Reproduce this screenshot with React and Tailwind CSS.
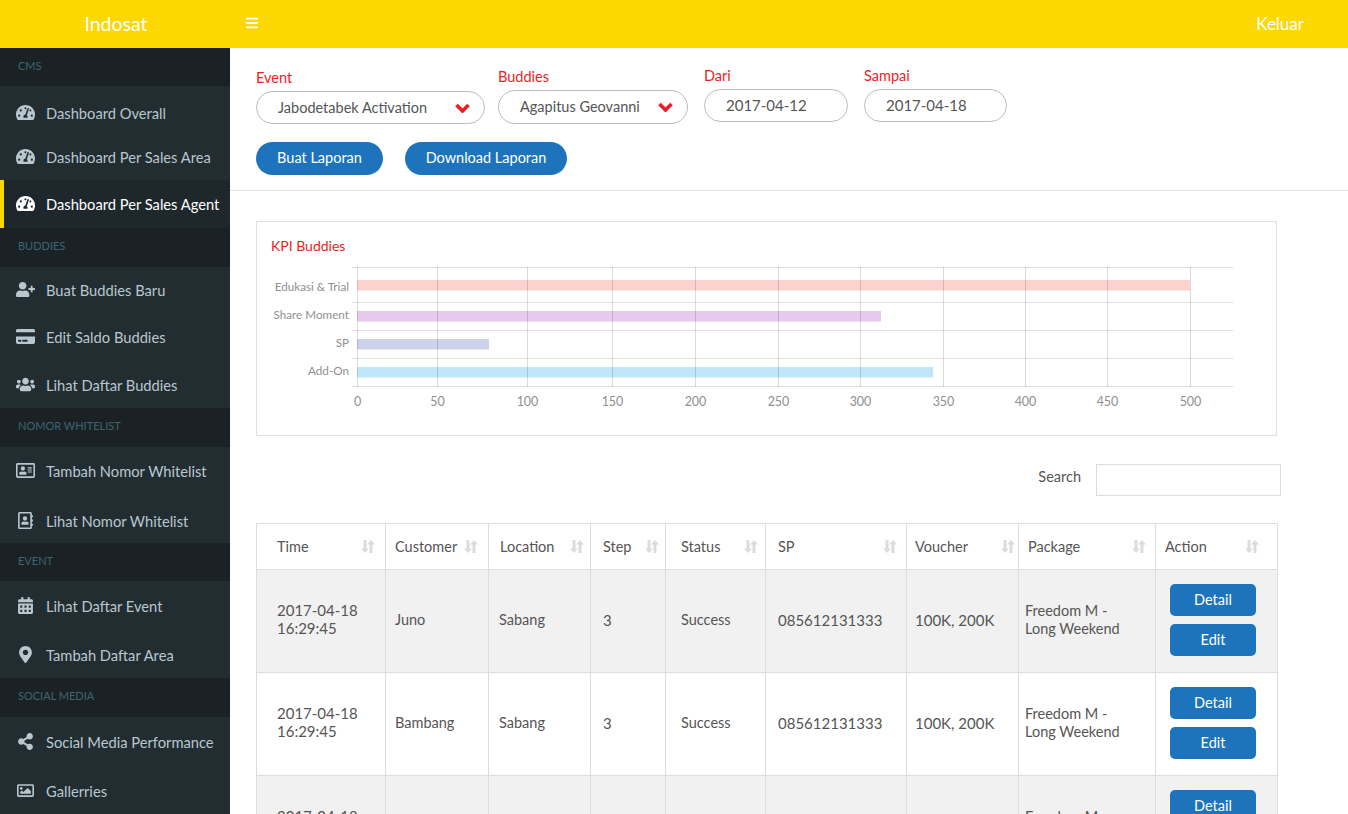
import { FaTachometerAlt, FaUserPlus, FaCreditCard, FaUsers, FaRegAddressCard, FaRegAddressBook, FaCalendarAlt, FaMapMarkerAlt, FaShareAlt, FaRegImage, FaBars } from 'react-icons/fa'

const MENU = [
  { section: 'CMS', head: 'h-[38px] pb-[1px]', items: [
    { label: 'Dashboard Overall', icon: FaTachometerAlt, h: 'h-[48px] pt-[4px]' },
    { label: 'Dashboard Per Sales Area', icon: FaTachometerAlt, h: 'h-[46px] pb-[2px]' },
    { label: 'Dashboard Per Sales Agent', icon: FaTachometerAlt, h: 'h-[48px] pb-[2px]', active: true },
  ] },
  { section: 'BUDDIES', head: 'h-[39px] pb-[2px]', items: [
    { label: 'Buat Buddies Baru', icon: FaUserPlus, h: 'h-[45px]' },
    { label: 'Edit Saldo Buddies', icon: FaCreditCard, h: 'h-[48px]' },
    { label: 'Lihat Daftar Buddies', icon: FaUsers, h: 'h-[48px]' },
  ] },
  { section: 'NOMOR WHITELIST', head: 'h-[39px] pb-[2px]', items: [
    { label: 'Tambah Nomor Whitelist', icon: FaRegAddressCard, h: 'h-[48px] pb-[2px]' },
    { label: 'Lihat Nomor Whitelist', icon: FaRegAddressBook, h: 'h-[48px] pt-[2px]' },
  ] },
  { section: 'EVENT', head: 'h-[38px] pb-[1px]', items: [
    { label: 'Lihat Daftar Event', icon: FaCalendarAlt, h: 'h-[49px]' },
    { label: 'Tambah Daftar Area', icon: FaMapMarkerAlt, h: 'h-[48px]' },
  ] },
  { section: 'SOCIAL MEDIA', head: 'h-[39px] pb-[2px]', items: [
    { label: 'Social Media Performance', icon: FaShareAlt, h: 'h-[49px]' },
    { label: 'Gallerries', icon: FaRegImage, h: 'h-[48px]' },
  ] },
]

const COLUMNS = [
  { name: 'Time', w: 'w-[129px]', head: 'pl-[20px] pr-[10px]', body: 'pl-[20px]' },
  { name: 'Customer', w: 'w-[103px]', head: 'pl-[9px] pr-[10px]', body: 'pl-[9px]' },
  { name: 'Location', w: 'w-[102px]', head: 'pl-[11px] pr-[6px]', body: 'pl-[10px]' },
  { name: 'Step', w: 'w-[75px]', head: 'pl-[12px] pr-[6px]', body: 'pl-[12px]' },
  { name: 'Status', w: 'w-[100px]', head: 'pl-[15px] pr-[7px]', body: 'pl-[15px]' },
  { name: 'SP', w: 'w-[141px]', head: 'pl-[12px] pr-[9px]', body: 'pl-[12px]' },
  { name: 'Voucher', w: 'w-[112px]', head: 'pl-[8px] pr-[3px]', body: 'pl-[8px]' },
  { name: 'Package', w: 'w-[137px]', head: 'pl-[9px] pr-[9px]', body: 'pl-[6px]' },
  { name: 'Action', w: 'w-[122px]', head: 'pl-[9px] pr-[18px]', body: 'pl-[14px]' },
]

const ROWS = [
  { customer: 'Juno', bg: 'bg-[#f1f1f1]' },
  { customer: 'Bambang', bg: 'bg-white' },
  { customer: 'Bambang', bg: 'bg-[#f1f1f1]' },
]

const BARS = [
  { label: 'Edukasi & Trial', y: 280, x2: 1190, fill: '#fbd2cd', ly: 287 },
  { label: 'Share Moment', y: 311, x2: 881, fill: '#e6c9ec', ly: 315 },
  { label: 'SP', y: 339, x2: 489, fill: '#cdd2ec', ly: 343 },
  { label: 'Add-On', y: 367, x2: 933, fill: '#bfe6fb', ly: 371 },
]

const TICKS = [[357, 0], [437, 50], [527, 100], [612, 150], [695, 200], [778, 250], [860, 300], [943, 350], [1025, 400], [1107, 450], [1190, 500]]

function SortIcon() {
  return (
    <svg width="14" height="15" viewBox="0 0 14 15" className="shrink-0 text-[#dcdcdc]" fill="currentColor">
      <path d="M2.5 1h3v8.5H8L4 14 0 9.5h2.5z" />
      <path d="M8.5 14h3V5.5H14L10 1 6 5.5h2.5z" />
    </svg>
  )
}

function Chevron() {
  return (
    <svg width="15" height="10" viewBox="0 0 15 10" fill="none" stroke="#ed1c24" strokeWidth="3.6">
      <path d="M1.5 2l6 6 6-6" />
    </svg>
  )
}

function Field({ label, value, width, chevron, box = 'h-[33px]' }) {
  return (
    <div className={width}>
      <div className="text-[#ed1c24] text-[14.5px] leading-[18px] mb-[4px]">{label}</div>
      <div className={box + ' rounded-full border border-[#bbbbbb] bg-white flex items-center justify-between pl-[21px] pr-[14px] text-[#555555] ' + (chevron ? 'text-[14.5px]' : 'text-[15px]')}>
        <span>{value}</span>
        {chevron && <Chevron />}
      </div>
    </div>
  )
}

function KpiChart() {
  return (
    <svg width="1000" height="160" viewBox="257 258 1000 160" className="block" style={{ fontFamily: 'Lato, sans-serif' }}>
      {[267, 302, 330, 358, 386].map((y) => (
        <line key={y} x1="352" x2="1233" y1={y + 0.5} y2={y + 0.5} stroke="#dddddd" />
      ))}
      {BARS.map((b) => (
        <rect key={b.label} x="357" y={b.y} width={b.x2 - 357} height="10.5" fill={b.fill} />
      ))}
      {TICKS.map(([x]) => (
        <line key={x} x1={x + 0.5} x2={x + 0.5} y1="267" y2="387" stroke="#000000" strokeOpacity="0.14" />
      ))}
      {BARS.map((b) => (
        <text key={b.label} x="349" y={b.ly + 4} textAnchor="end" fontSize="11.7" fill="#8f8f8f">{b.label}</text>
      ))}
      {TICKS.map(([x, v]) => (
        <text key={v} x={x + 0.5} y="406" textAnchor="middle" fontSize="12.5" fill="#8f8f8f">{v}</text>
      ))}
    </svg>
  )
}

export default function App() {
  const cell = 'border border-[#dddddd] pb-[2px] '
  return (
    <div className="h-screen overflow-hidden flex flex-col bg-white font-['Lato',sans-serif]">
      <header className="h-[48px] shrink-0 bg-[#fbd800] flex items-center">
        <div className="w-[232px] text-center text-white text-[19.5px]">Indosat</div>
        <FaBars className="ml-[13px] text-white w-[14px] h-[14px] -mt-[3px]" />
        <div className="ml-auto mr-[44px] text-white text-[17px]">Keluar</div>
      </header>

      <div className="flex flex-1 min-h-0">
        <aside className="w-[230px] shrink-0 bg-[#222d32]">
          {MENU.map((group) => (
            <div key={group.section}>
              <div className={group.head + ' bg-[#1a2226] flex items-center pl-[18px] text-[11px] text-[#3f6470]'}>{group.section}</div>
              {group.items.map((item) => {
                const Icon = item.icon
                return (
                  <div key={item.label} className={item.h + ' flex items-center text-[14.7px] ' + (item.active ? 'border-l-4 border-[#fbd800] bg-[#1e282c] pl-[12px] text-white' : 'pl-[16px] text-[#b8c7ce]')}>
                    <span className="w-[30px] shrink-0 flex"><Icon className="w-[19px] h-[17px]" /></span>
                    <span className="whitespace-nowrap pt-[2px]">{item.label}</span>
                  </div>
                )
              })}
            </div>
          ))}
        </aside>

        <main className="flex-1 min-w-0 overflow-hidden">
          <section className="h-[143px] border-b border-[#e3e3e3] pl-[26px]">
            <div className="flex items-start">
              <Field label="Event" value="Jabodetabek Activation" width="w-[229px] mt-[21px]" chevron />
              <Field label="Buddies" value="Agapitus Geovanni" width="w-[190px] ml-[13px] mt-[20px]" box="h-[34px]" chevron />
              <Field label="Dari" value="2017-04-12" width="w-[144px] ml-[16px] mt-[19px]" />
              <Field label="Sampai" value="2017-04-18" width="w-[143px] ml-[16px] mt-[19px]" />
            </div>
            <div className="flex gap-[22px] mt-[18px]">
              <button className="h-[33px] w-[127px] rounded-full bg-[#1d74bd] text-white text-[14.5px] pb-[2px]">Buat Laporan</button>
              <button className="h-[33px] w-[162px] rounded-full bg-[#1d74bd] text-white text-[14.5px] pb-[2px]">Download Laporan</button>
            </div>
          </section>

          <section className="w-[1021px] h-[215px] mt-[30px] ml-[26px] border border-[#e0e0e0]">
            <div className="text-[#ed1c24] text-[14px] leading-[18px] pl-[14px] pt-[15px]">KPI Buddies</div>
            <div className="mt-[3px] overflow-hidden"><KpiChart /></div>
          </section>

          <div className="flex items-center justify-end w-[1051px] mt-[28px] text-[14.5px] text-[#555555]">
            <span className="mr-[15px] pb-[6px]">Search</span>
            <div className="w-[185px] h-[32px] border border-[#dddddd]" />
          </div>

          <table className="ml-[26px] mt-[27px] w-[1021px] table-fixed border-collapse text-[14.5px] text-[#555555]">
            <thead>
              <tr className="h-[46px] bg-white">
                {COLUMNS.map((c) => (
                  <th key={c.name} className={c.w + ' border border-[#dddddd] font-normal text-left'}>
                    <div className={c.head + ' flex items-center justify-between'}>
                      <span>{c.name}</span>
                      <SortIcon />
                    </div>
                  </th>
                ))}
              </tr>
            </thead>
            <tbody>
              {ROWS.map((row, i) => (
                <tr key={i} className={row.bg + ' h-[103px]'}>
                  <td className={COLUMNS[0].body + ' border border-[#dddddd] pb-[4px] text-[15px] leading-[18px]'}>2017-04-18<br />16:29:45</td>
                  <td className={COLUMNS[1].body + ' ' + cell}>{row.customer}</td>
                  <td className={COLUMNS[2].body + ' ' + cell}>Sabang</td>
                  <td className={COLUMNS[3].body + ' ' + cell + 'text-[15px]'}>3</td>
                  <td className={COLUMNS[4].body + ' ' + cell}>Success</td>
                  <td className={COLUMNS[5].body + ' ' + cell + 'text-[15px]'}>085612131333</td>
                  <td className={COLUMNS[6].body + ' ' + cell + 'text-[15px]'}>100K, 200K</td>
                  <td className={COLUMNS[7].body + ' ' + cell + 'leading-[18px]'}>Freedom M -<br />Long Weekend</td>
                  <td className={COLUMNS[8].body + ' border border-[#dddddd] pb-[2px]'}>
                    <div className="flex flex-col gap-[8px] w-[86px]">
                      <button className="h-[32px] rounded-[5px] bg-[#1d74bd] text-white">Detail</button>
                      <button className="h-[32px] rounded-[5px] bg-[#1d74bd] text-white">Edit</button>
                    </div>
                  </td>
                </tr>
              ))}
            </tbody>
          </table>
        </main>
      </div>
    </div>
  )
}
